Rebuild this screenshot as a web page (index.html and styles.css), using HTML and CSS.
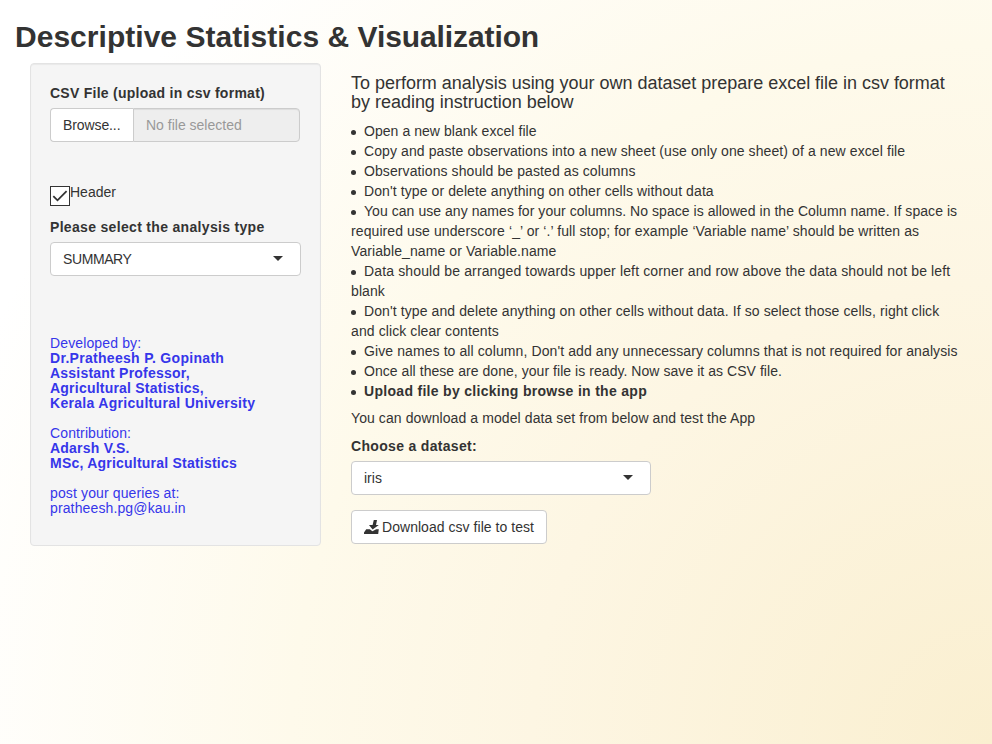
FILE: index.html
```html
<!DOCTYPE html>
<html lang="en">
<head>
<meta charset="utf-8">
<title>Descriptive Statistics &amp; Visualization</title>
<link rel="stylesheet" href="styles.css">
</head>
<body>
<div class="container">
  <h1 class="title">Descriptive Statistics &amp; <span class="title-end">Visualization</span></h1>
  <div class="row">
    <aside class="well">
      <label class="label" for="file">CSV File (upload in csv format)</label>
      <div class="file-group">
        <span class="browse">Browse...</span>
        <span class="file-name" id="file">No file selected</span>
      </div>
      <div class="check">
        <svg class="check-box" viewBox="0 0 20 20"><rect x=".5" y=".5" width="19" height="19" fill="#fff" stroke="#333"/><path d="M3.3 10.2 7.5 14.3 16.6 5.1" fill="none" stroke="#333" stroke-width="1.8"/></svg>
        <span>Header</span>
      </div>
      <div class="label">Please select the analysis type</div>
      <div class="select"><span class="caps">SUMMARY</span><i class="caret"></i></div>
      <div class="credits">
        <p>Developed by:<br><b>Dr.Pratheesh P. Gopinath<br><span class="tight">Assistant Professor,<br>Agricultural Statistics,</span><br>Kerala Agricultural University</b></p>
        <p>Contribution:<br><b class="tight">Adarsh V.S.<br>MSc, Agricultural Statistics</b></p>
        <p>post your queries at:<br>pratheesh.pg@kau.in</p>
      </div>
    </aside>
    <main class="main">
      <h4 class="intro">To perform analysis using your own dataset prepare excel file in csv format by reading instruction below</h4>
      <ul class="steps">
        <li><span class="snug">Open a new blank excel file</span></li>
        <li>Copy and paste observations into a new sheet (use only one sheet) of a new excel file</li>
        <li>Observations should be pasted as columns</li>
        <li>Don't type or delete anything on other cells without data</li>
        <li><span class="snug">You can use any names for your columns. No space is allowed in the Column name. If space is</span><br>required use underscore ‘_’ or ‘.’ full stop; for example ‘Variable name’ should be written as<br>Variable_name or Variable.name</li>
        <li><span class="loose">Data should be arranged towards upper left corner and row above the data should not be left</span><br>blank</li>
        <li>Don't type and delete anything on other cells without data. If so select those cells, right click<br>and click clear contents</li>
        <li>Give names to all column, Don't add any unnecessary columns that is not required for analysis</li>
        <li><span class="snug">Once all these are done, your file is ready. Now save it as CSV file.</span></li>
        <li><b>Upload file by clicking browse in the app</b></li>
      </ul>
      <p class="note">You can download a model data set from below and test the App</p>
      <div class="label">Choose a dataset:</div>
      <div class="select select-dataset"><span>iris</span><i class="caret"></i></div>
      <a class="button"><svg class="download" viewBox="0 0 15 14"><path d="M9.8 0H13L12 5H14.8L8.6 9.4 5 5H8.6ZM2.2 9.2H5.8L8.4 11.2 12.2 9.2H14.8L14.2 14H0V12.6Z" fill="#333"/></svg><span>Download csv file to test</span></a>
    </main>
  </div>
</div>
</body>
</html>
```
FILE: styles.css
```css
* { box-sizing: border-box; }
html { min-height: 100%; }
body {
  margin: 0;
  min-height: 744px;
  font: 14px/20px "Liberation Sans", Arial, sans-serif;
  color: #333;
  background: radial-gradient(circle at 100% 100%, #faefd0, #fdf6e3 460px, #fefaeb 700px, #fff 1080px);
}
b { letter-spacing: .3px; }
.container { padding: 20px 15px 0; }
.title { margin: 0 0 10px; font-size: 30px; line-height: 33px; font-weight: bold; letter-spacing: .03px; }
.title-end { letter-spacing: -.1px; }
.row { display: flex; align-items: flex-start; padding-left: 15px; gap: 30px; }
.well {
  width: 291px;
  height: 483px;
  padding: 19px;
  background: #f5f5f5;
  border: 1px solid #e3e3e3;
  border-radius: 4px;
  box-shadow: inset 0 1px 1px rgba(0, 0, 0, .05);
}
.label { display: block; margin-bottom: 5px; font-weight: bold; letter-spacing: .32px; }
label.label { letter-spacing: .26px; }
.file-group { display: flex; width: 250px; height: 34px; }
.browse, .file-name { padding: 6px 12px; border: 1px solid #ccc; }
.browse { width: 83px; background: #fff; border-right: 0; border-radius: 4px 0 0 4px; white-space: nowrap; letter-spacing: -.1px; }
.file-name {
  flex: 1;
  color: #999;
  background: #eee;
  border-radius: 0 4px 4px 0;
  box-shadow: inset 0 1px 1px rgba(0, 0, 0, .075);
}
.check { display: flex; height: 25px; margin: 40px 0 10px; }
.check-box { width: 20px; height: 20px; margin-top: 4px; }
.caps { letter-spacing: -.4px; }
.select {
  display: flex;
  align-items: center;
  justify-content: space-between;
  width: 251px;
  height: 34px;
  padding: 0 17px 0 12px;
  background: #fff;
  border: 1px solid #ccc;
  border-radius: 4px;
}
.caret { margin-bottom: 1px; border: 5px solid transparent; border-top-color: #333; border-bottom: 0; }
.credits { margin-top: 60px; color: #3636ea; line-height: 15px; letter-spacing: .13px; }
.credits p { margin: 0 0 15px; }
.tight { letter-spacing: .22px; }
.main { width: 611px; padding-top: 11px; }
.intro { margin: 0 0 9px; font-size: 18px; line-height: 19px; font-weight: normal; letter-spacing: -.02px; }
.steps { margin: 0; padding: 0; list-style: none; letter-spacing: .095px; white-space: nowrap; }
.steps li::before {
  content: "";
  display: inline-block;
  width: 5px;
  height: 5px;
  margin: 0 8px 1px 0;
  border-radius: 50%;
  background: #333;
}
.snug { letter-spacing: .05px; }
.loose { letter-spacing: .14px; }
.note { margin: 7px 0 8px; letter-spacing: .09px; }
.select-dataset { width: 300px; }
.button {
  display: inline-flex;
  align-items: center;
  gap: 3px;
  height: 34px;
  margin-top: 15px;
  padding: 0 12px;
  background: #fff;
  border: 1px solid #ccc;
  border-radius: 4px;
  white-space: nowrap;
  letter-spacing: .04px;
}
.download { width: 15px; height: 14px; }
```
